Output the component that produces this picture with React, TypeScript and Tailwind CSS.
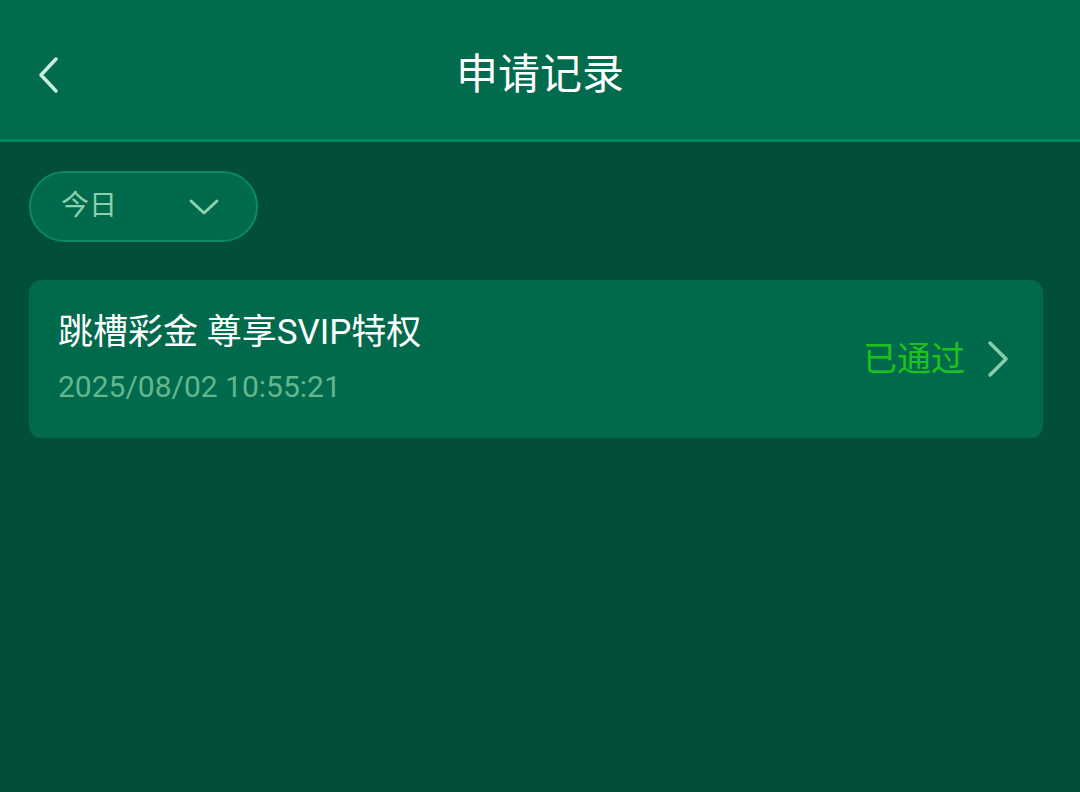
export default function App() {
  return (
    <div
      className="w-[1080px] h-[792px] bg-[#014f39] flex flex-col overflow-hidden"
      style={{ fontFamily: 'Roboto, "Noto Sans CJK SC", "Noto Sans", sans-serif' }}
    >
      <header className="relative h-[142px] bg-[#016b4d] border-b-[3px] border-[#05885c] flex items-center justify-center">
        <button className="absolute left-[30px] top-[52px] w-[36px] h-[46px] flex items-center justify-center">
          <svg width="26" height="38" viewBox="0 0 26 38" fill="none">
            <path d="M21 3 L6 19 L21 35" stroke="#c9eedd" strokeWidth="3.5" strokeLinecap="round" strokeLinejoin="round" />
          </svg>
        </button>
        <h1 className="text-[42px] text-white font-normal leading-none mt-[10px]">申请记录</h1>
      </header>

      <main className="px-[29px] pt-[29px] flex flex-col gap-[38px]">
        <button className="w-[229px] h-[71px] rounded-full bg-[#016a4c] border-2 border-[#0b8a5e] flex items-center justify-between pl-[30px] pr-[36px]">
          <span className="text-[28px] text-[#8dd0ae] leading-none -mt-[2px]">今日</span>
          <svg width="32" height="20" viewBox="0 0 32 20" fill="none">
            <path d="M3 4 L16 16 L29 4" stroke="#8dd0ae" strokeWidth="3" strokeLinecap="round" strokeLinejoin="round" />
          </svg>
        </button>

        <div className="w-[1014px] h-[158px] rounded-[12px] bg-[#016a4c] flex items-center justify-between pl-[29px] pr-[34px]">
          <div className="flex flex-col gap-[22px] -mt-[2px]">
            <div className="text-[35px] text-white leading-none">跳槽彩金 尊享SVIP特权</div>
            <div className="text-[30px] text-[#62b78f] leading-none">2025/08/02 10:55:21</div>
          </div>
          <div className="flex items-center gap-[22px]">
            <span className="text-[34px] text-[#1ec21b] leading-none">已通过</span>
            <svg width="22" height="36" viewBox="0 0 22 36" fill="none">
              <path d="M3 2 L19 18 L3 34" stroke="#86cdaa" strokeWidth="3.5" strokeLinecap="round" strokeLinejoin="round" />
            </svg>
          </div>
        </div>
      </main>
    </div>
  );
}
